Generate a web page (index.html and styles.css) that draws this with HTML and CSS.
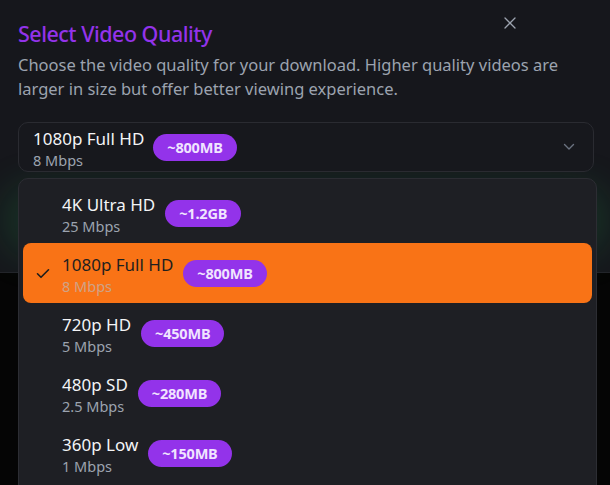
FILE: index.html
```html
<!DOCTYPE html>
<html lang="en">
<head>
<meta charset="utf-8">
<title>Select Video Quality</title>
<link rel="stylesheet" href="styles.css">
</head>
<body>
<div class="page">
  <div class="dialog">
    <button class="close" aria-label="Close">
      <svg width="12" height="12" viewBox="0 0 12 12"><path d="M1 1L11 11M11 1L1 11" stroke="currentColor" stroke-width="1.3" fill="none" stroke-linecap="round"/></svg>
    </button>
    <h2 class="title">Select Video Quality</h2>
    <p class="desc">Choose the video quality for your download. Higher quality videos are larger in size but offer better viewing experience.</p>
    <div class="field">
      <button class="trigger">
        <span class="opt">
          <span class="labels"><span class="name">1080p Full HD</span><span class="rate">8 Mbps</span></span>
          <span class="badge">~800MB</span>
        </span>
        <svg class="chev" width="12" height="8" viewBox="0 0 12 8"><path d="M1.5 1.5L6 6L10.5 1.5" stroke="currentColor" stroke-width="1.4" fill="none" stroke-linecap="round" stroke-linejoin="round"/></svg>
      </button>
      <div class="popover">
        <div class="item">
          <span class="check"></span>
          <span class="labels"><span class="name">4K Ultra HD</span><span class="rate">25 Mbps</span></span>
          <span class="badge">~1.2GB</span>
        </div>
        <div class="item selected">
          <span class="check"><svg width="14" height="11" viewBox="0 0 14 11"><path d="M1.5 5.8L5 9.3L12.5 1.8" stroke="currentColor" stroke-width="1.6" fill="none" stroke-linecap="round" stroke-linejoin="round"/></svg></span>
          <span class="labels"><span class="name">1080p Full HD</span><span class="rate">8 Mbps</span></span>
          <span class="badge">~800MB</span>
        </div>
        <div class="item">
          <span class="check"></span>
          <span class="labels"><span class="name">720p HD</span><span class="rate">5 Mbps</span></span>
          <span class="badge">~450MB</span>
        </div>
        <div class="item">
          <span class="check"></span>
          <span class="labels"><span class="name">480p SD</span><span class="rate">2.5 Mbps</span></span>
          <span class="badge">~280MB</span>
        </div>
        <div class="item">
          <span class="check"></span>
          <span class="labels"><span class="name">360p Low</span><span class="rate">1 Mbps</span></span>
          <span class="badge">~150MB</span>
        </div>
      </div>
    </div>
    <div class="footer">
      <button class="download">Download</button>
    </div>
  </div>
</div>
</body>
</html>
```
FILE: styles.css
```css
* { box-sizing: border-box; }
html, body { margin: 0; padding: 0; }
body {
  background: #050505;
  font-family: "Noto Sans", "Open Sans", sans-serif;
  width: 610px;
  height: 485px;
  overflow: hidden;
}
.page { position: relative; }
.dialog {
  position: relative;
  height: 273px;
  background: #16171c;
  border-bottom: 1px solid #23242a;
  padding: 20px 16px 0 18px;
  overflow: visible;
}
.close {
  position: absolute;
  top: 16px;
  right: 93px;
  width: 14px;
  height: 14px;
  padding: 0;
  border: 0;
  background: none;
  color: #9ca3af;
  display: flex;
  align-items: center;
  justify-content: center;
}
.title {
  margin: 0;
  font-size: 21.5px;
  line-height: 28px;
  font-weight: 500;
  color: #9333ea;
  letter-spacing: -0.5px;
}
.desc {
  margin: 5px 0 0;
  width: 560px;
  font-size: 16.5px;
  line-height: 24px;
  color: #9ca3af;
}
.field {
  position: relative;
  margin-top: 21px;
  width: 576px;
}
.trigger {
  width: 576px;
  height: 50px;
  display: flex;
  align-items: center;
  justify-content: space-between;
  padding: 0 18px 0 14px;
  background: #17181d;
  border: 1px solid #2a2b31;
  border-radius: 10px;
  font-family: inherit;
  text-align: left;
}
.opt { display: flex; align-items: center; gap: 9px; }
.labels { display: flex; flex-direction: column; padding-top: 3px; }
.name {
  font-size: 17px;
  line-height: 22px;
  color: #f3f4f6;
}
.rate {
  font-size: 14.5px;
  line-height: 20px;
  color: #9ca3af;
}
.badge {
  display: inline-flex;
  align-items: center;
  height: 27px;
  padding: 0 14px;
  border-radius: 14px;
  background: #9333ea;
  color: #f0e4ff;
  font-size: 14.5px;
  font-weight: 700;
  letter-spacing: -0.2px;
}
.chev { color: #6b7280; }
.popover {
  position: absolute;
  z-index: 2;
  top: 56px;
  left: 0;
  width: 579px;
  height: 330px;
  background: #1e1f24;
  border: 1px solid #2c2d33;
  border-radius: 10px;
  padding: 4px;
  display: flex;
  flex-direction: column;
}
.item {
  height: 60px;
  flex: none;
  display: flex;
  align-items: center;
  border-radius: 8px;
}
.item .check {
  width: 39px;
  flex: none;
  display: flex;
  justify-content: center;
  padding-left: 1px;
  color: #1c1c1c;
}
.item .labels { margin-right: 10px; }
.item.selected { background: #f97316; }
.item.selected .name { color: #1f1f1f; }
.item.selected .rate { color: #cfa286; }
.footer {
  margin-top: 26px;
  display: flex;
  justify-content: flex-end;
}
.download {
  width: 576px;
  height: 44px;
  border: 0;
  border-radius: 10px;
  background: #16a34a;
  box-shadow: 0 0 40px 10px rgba(34, 197, 94, 0.18);
  color: #fff;
  font-family: inherit;
  font-size: 15px;
}
```
